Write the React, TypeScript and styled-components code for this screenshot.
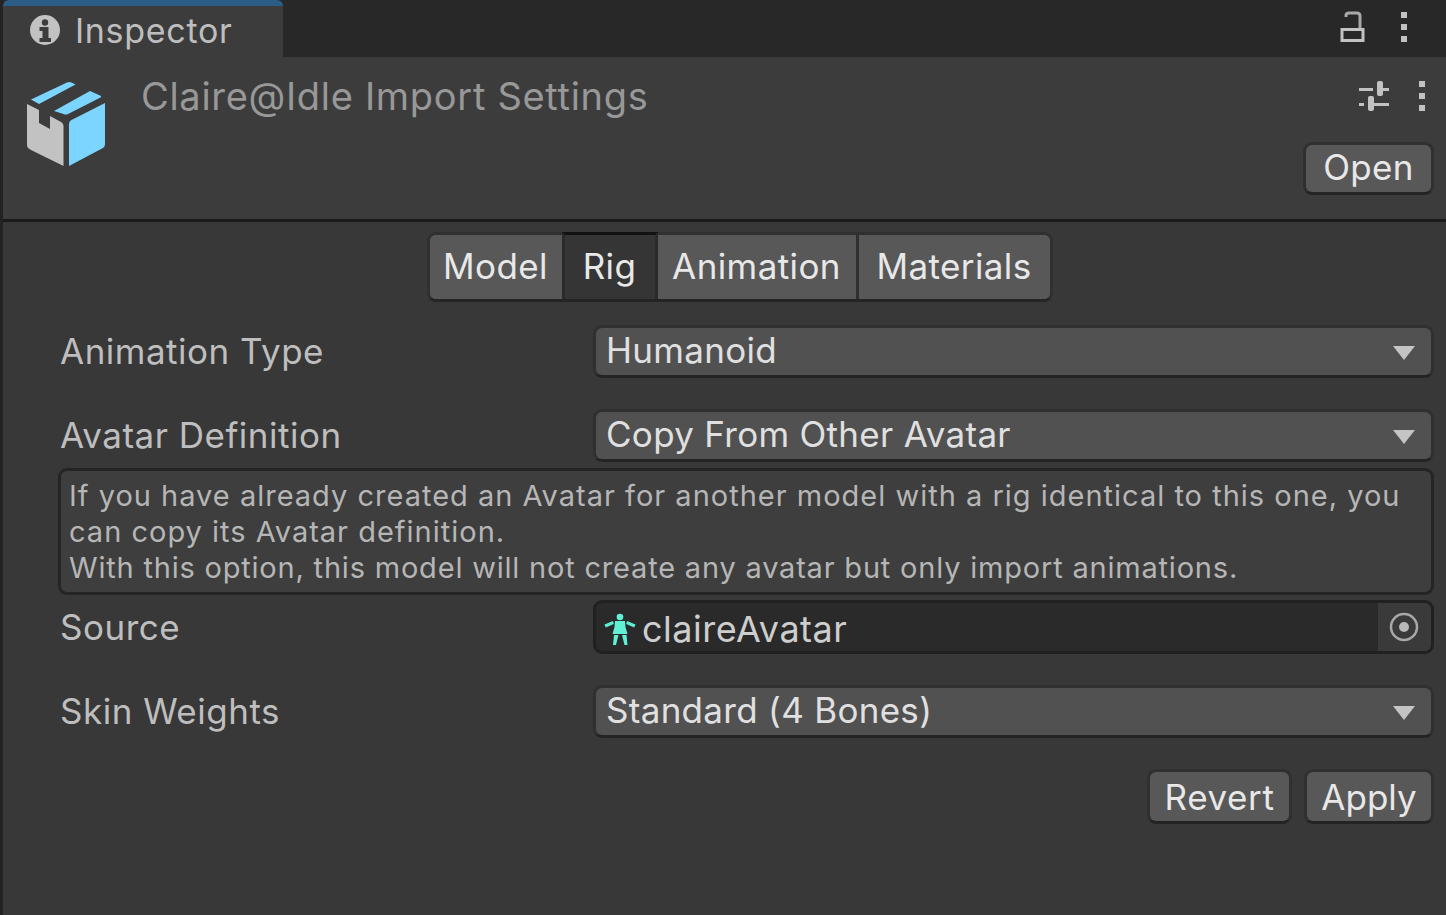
import React from "react";
import styled, { createGlobalStyle } from "styled-components";

const GlobalStyle = createGlobalStyle`
  html, body {
    margin: 0;
    padding: 0;
    background: #383838;
  }
  body {
    font-family: Inter, "Liberation Sans", sans-serif;
  }
`;

const InfoIcon = () => (
  <svg width="30" height="30" viewBox="0 0 30 30">
    <circle cx="15" cy="15" r="15" fill="#c2c2c2" />
    <circle cx="15" cy="7.500" r="3.200" fill="#3c3c3c" />
    <path d="M9.500 12h9v11h2.500v4H9.500v-4h3v-7h-3z" fill="#3c3c3c" />
  </svg>
);

const LockIcon = () => (
  <svg width="26" height="32" viewBox="0 0 26 32" fill="none">
    <path d="M2 29.500V18.500h21v11z" stroke="#c2c2c2" strokeWidth="3" />
    <path d="M6 6V4.500Q6 2 9 2h8q3 0 3 3v12" stroke="#a8a8a8" strokeWidth="3" />
  </svg>
);

const DotsIcon = () => (
  <svg width="8" height="32" viewBox="0 0 8 32">
    <rect x="1" y="1" width="6" height="6" fill="#c2c2c2" />
    <rect x="1" y="13" width="6" height="6" fill="#c2c2c2" />
    <rect x="1" y="25" width="6" height="6" fill="#c2c2c2" />
  </svg>
);

const SlidersIcon = () => (
  <svg width="30" height="30" viewBox="0 0 30 30" fill="#c2c2c2">
    <rect x="0" y="7" width="14" height="3" />
    <rect x="22" y="7" width="8" height="3" />
    <rect x="18" y="0" width="6" height="15" rx="2" />
    <rect x="0" y="22" width="5" height="3" />
    <rect x="12" y="22" width="18" height="3" />
    <rect x="9" y="15" width="6" height="15" rx="2" />
  </svg>
);

const PackageIcon = () => (
  <svg width="80" height="86" viewBox="0 0 80 86">
    <path d="M4 18.500 40 1.500c1.500-.7 3-.7 4.500 0L48.500 3.500 12 23z" fill="#7bd5ff" />
    <path d="M27 30 63 10l10 4.500c1.500.7 1.500 1.600 0 2.300L41 33c-1.500.7-3 .7-4.500 0z" fill="#7bd5ff" />
    <path d="M0 23 12 29v13l11 6V35l11 6c1.500 1 2.500 2 2.500 4v40L4 69c-3-1.500-4-3-4-5z" fill="#c2c2c2" />
    <path d="M42 85V43c0-2 1-3 2.500-4L78 22v41c0 2-1 3.500-3 4.500z" fill="#7bd5ff" />
  </svg>
);

const AvatarIcon = () => (
  <svg width="32" height="32" viewBox="0 0 32 32" fill="#5ff0d6">
    <circle cx="16" cy="4" r="3.300" />
    <path d="M.5 11.500 9 8l.8 3-8 3.500zM31.500 11.500 23 8l-.8 3 8 3.500z" />
    <path d="M11 8h10l.5 6 2 7H8.500l2-7z" />
    <path d="M10 22h4.500L12 32H9zM18 22h4.500l1 10h-3z" />
  </svg>
);

const PickerIcon = () => (
  <svg width="30" height="30" viewBox="0 0 30 30" fill="none">
    <circle cx="15" cy="15" r="13" stroke="#a8a8a8" strokeWidth="2.500" />
    <circle cx="15" cy="15" r="5" fill="#b8b8b8" />
  </svg>
);

const TabStrip = styled.div`
  display: flex;
  justify-content: space-between;
  height: 57px;
  background: #282828;
`;

const ActiveTab = styled.div`
  width: 280px;
  height: 57px;
  box-sizing: border-box;
  display: flex;
  align-items: center;
  gap: 15px;
  padding: 0 0 3px 27px;
  background: #3c3c3c;
  border-top: 6px solid #2c5d87;
  border-top-left-radius: 6px;
  border-top-right-radius: 6px;
  color: #bebebe;
  font-size: 34px;
  letter-spacing: 0.7px;
`;

const StripActions = styled.div`
  display: flex;
  align-items: center;
  gap: 34px;
  padding: 0 38px 3px 0;
`;

const Shell = styled.div`
  width: 1446px;
  height: 915px;
  overflow: hidden;
  background: #383838;
  border-left: 3px solid #232323;
  box-sizing: border-box;
  display: flex;
  flex-direction: column;
`;

const Header = styled.header`
  height: 165px;
  box-sizing: border-box;
  display: flex;
  background: #3c3c3c;
  border-bottom: 3px solid #1a1a1a;
  padding: 0 12px 0 24px;
`;

const AssetIcon = styled.div`
  width: 114px;
  padding-top: 24px;
  flex-shrink: 0;
`;

const AssetTitle = styled.div`
  flex: 1;
  padding-top: 16px;
  color: #989898;
  font-size: 38px;
  line-height: 46px;
  letter-spacing: 0.7px;
`;

const HeaderSide = styled.div`
  display: flex;
  flex-direction: column;
  align-items: flex-end;
  padding-top: 24px;
`;

const HeaderIcons = styled.div`
  display: flex;
  align-items: center;
  gap: 29px;
  padding-right: 8px;
  height: 30px;
`;

const Button = styled.button<{ $width: number; $spacing?: number }>`
  width: ${(p) => p.$width}px;
  height: 53px;
  box-sizing: border-box;
  display: flex;
  align-items: center;
  justify-content: center;
  background: #585858;
  border: 3px solid #303030;
  border-bottom-color: #242424;
  border-radius: 9px;
  color: #e8e8e8;
  font-family: inherit;
  font-size: 35px;
  letter-spacing: ${(p) => p.$spacing ?? 0.3}px;
  padding: 0 0 4px;
`;

const OpenButton = styled(Button)`
  margin-top: 31px;
`;

const Body = styled.main`
  flex: 1;
  display: flex;
  flex-direction: column;
  padding: 10px 12px 0 55px;
`;

const TabGroup = styled.div`
  align-self: center;
  display: flex;
  height: 70px;
  box-sizing: border-box;
  margin-left: -13px;
  border: 3px solid #303030;
  border-bottom-color: #242424;
  border-radius: 9px;
  background: #585858;
`;

const TabButton = styled.div<{ $width: number; $active?: boolean }>`
  width: ${(p) => p.$width}px;
  display: flex;
  align-items: center;
  justify-content: center;
  box-sizing: border-box;
  color: #e8e8e8;
  font-size: 35px;
  letter-spacing: 0.4px;
  padding-bottom: 2px;
  margin-top: ${(p) => (p.$active ? "-3px" : "0")};
  background: ${(p) => (p.$active ? "#353535" : "#585858")};
  border-top: ${(p) => (p.$active ? "3px solid #111111" : "0")};
  border-right: 3px solid ${(p) => (p.$active ? "#2a2a2a" : "#2f2f2f")};
  border-left: ${(p) => (p.$active ? "3px solid #2a2a2a" : "0")};

  &:first-child {
    border-right: 0;
    border-radius: 6px 0 0 6px;
  }

  &:last-child {
    border-right: 0;
    border-radius: 0 6px 6px 0;
  }
`;

const Row = styled.div<{ $top: number }>`
  display: grid;
  grid-template-columns: 535px 1fr;
  align-items: center;
  height: 53px;
  margin-top: ${(p) => p.$top}px;
`;

const Label = styled.label`
  padding-left: 2px;
  color: #bebebe;
  font-size: 35px;
  letter-spacing: 0.5px;
  line-height: 53px;
  height: 53px;
`;

const Dropdown = styled.div`
  height: 53px;
  box-sizing: border-box;
  display: flex;
  align-items: center;
  justify-content: space-between;
  padding: 0 16px 3px 10px;
  background: #515151;
  border: 3px solid #303030;
  border-bottom-color: #242424;
  border-radius: 9px;
  color: #e0e0e0;
  font-size: 35px;
  letter-spacing: 0.3px;
`;

const Caret = styled.span`
  width: 0;
  height: 0;
  margin-top: 5px;
  border-left: 11px solid transparent;
  border-right: 11px solid transparent;
  border-top: 14px solid #c4c4c4;
`;

const HelpBox = styled.div`
  margin-top: 6px;
  height: 127px;
  box-sizing: border-box;
  padding: 7px 8px 0;
  background: #3e3e3e;
  border: 3px solid #252525;
  border-radius: 9px;
  color: #b6b6b6;
  font-size: 29px;
  line-height: 36px;
`;

const HelpText = styled.p<{ $spacing: number }>`
  margin: 0;
  letter-spacing: ${(p) => p.$spacing}px;
`;

const ObjectField = styled.div`
  height: 54px;
  box-sizing: border-box;
  display: flex;
  align-items: stretch;
  background: #2a2a2a;
  border: 3px solid #212121;
  border-radius: 9px;
  overflow: hidden;
  color: #cecece;
  font-size: 36px;
  letter-spacing: 0.5px;
`;

const ObjectValue = styled.div`
  flex: 1;
  display: flex;
  align-items: center;
  gap: 6px;
  padding: 4px 0 0 8px;
`;

const PickerSlot = styled.div`
  width: 53px;
  display: flex;
  align-items: center;
  justify-content: center;
  padding-right: 2px;
  box-sizing: border-box;
  background: #3a3a3a;
`;

const Actions = styled.div`
  display: flex;
  justify-content: flex-end;
  gap: 12px;
  margin-top: 31px;
`;

const ActionButton = styled(Button)`
  height: 55px;
  padding-bottom: 0;
`;

export default function App() {
  return (
    <>
      <GlobalStyle />
      <Shell>
        <TabStrip>
          <ActiveTab>
            <InfoIcon />
            Inspector
          </ActiveTab>
          <StripActions>
            <LockIcon />
            <DotsIcon />
          </StripActions>
        </TabStrip>
        <Header>
          <AssetIcon>
            <PackageIcon />
          </AssetIcon>
          <AssetTitle>Claire@Idle Import Settings</AssetTitle>
          <HeaderSide>
            <HeaderIcons>
              <SlidersIcon />
              <DotsIcon />
            </HeaderIcons>
            <OpenButton $width={131}>Open</OpenButton>
          </HeaderSide>
        </Header>
        <Body>
          <TabGroup>
            <TabButton $width={132}>Model</TabButton>
            <TabButton $width={96} $active>Rig</TabButton>
            <TabButton $width={201}>Animation</TabButton>
            <TabButton $width={191}>Materials</TabButton>
          </TabGroup>
          <Row $top={23}>
            <Label>Animation Type</Label>
            <Dropdown>
              Humanoid
              <Caret />
            </Dropdown>
          </Row>
          <Row $top={31}>
            <Label>Avatar Definition</Label>
            <Dropdown>
              Copy From Other Avatar
              <Caret />
            </Dropdown>
          </Row>
          <HelpBox>
            <HelpText $spacing={1}>
              If you have already created an Avatar for another model with a rig identical to this one, you can copy its Avatar definition.
            </HelpText>
            <HelpText $spacing={0.8}>
              With this option, this model will not create any avatar but only import animations.
            </HelpText>
          </HelpBox>
          <Row $top={5}>
            <Label>Source</Label>
            <ObjectField>
              <ObjectValue>
                <AvatarIcon />
                claireAvatar
              </ObjectValue>
              <PickerSlot>
                <PickerIcon />
              </PickerSlot>
            </ObjectField>
          </Row>
          <Row $top={32}>
            <Label>Skin Weights</Label>
            <Dropdown>
              Standard (4 Bones)
              <Caret />
            </Dropdown>
          </Row>
          <Actions>
            <ActionButton $width={145} $spacing={0.6}>Revert</ActionButton>
            <ActionButton $width={130} $spacing={0}>Apply</ActionButton>
          </Actions>
        </Body>
      </Shell>
    </>
  );
}
